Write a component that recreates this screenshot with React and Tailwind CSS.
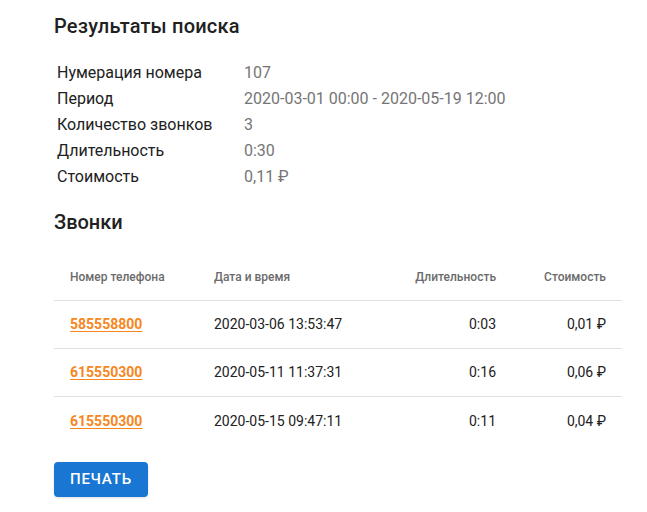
import React from 'react';

const summary = [
  { label: 'Нумерация номера', value: '107' },
  { label: 'Период', value: '2020-03-01 00:00 - 2020-05-19 12:00' },
  { label: 'Количество звонков', value: '3' },
  { label: 'Длительность', value: '0:30' },
  { label: 'Стоимость', value: '0,11 ₽' },
];

const calls = [
  { phone: '585558800', date: '2020-03-06 13:53:47', duration: '0:03', cost: '0,01 ₽' },
  { phone: '615550300', date: '2020-05-11 11:37:31', duration: '0:16', cost: '0,06 ₽' },
  { phone: '615550300', date: '2020-05-15 09:47:11', duration: '0:11', cost: '0,04 ₽' },
];

const App = () => {
  return (
    <div className="bg-white min-h-[512px] pl-[54px] pr-[25px] pt-[12px] text-[#212121]" style={{ fontFamily: 'Roboto, "Liberation Sans", sans-serif' }}>
      <h2 className="text-[20px] leading-[28px] font-medium tracking-[0.2px]">Результаты поиска</h2>

      {/* Сводка */}
      <div className="mt-[20px] pl-[3px]">
        {summary.map((row) => (
          <div key={row.label} className="flex h-[26px] items-center text-[16px]">
            <div className="w-[187px] text-[#212121]">{row.label}</div>
            <div className="text-[#757575]">{row.value}</div>
          </div>
        ))}
      </div>

      <h3 className="mt-[20px] text-[20px] leading-[24px] font-medium">Звонки</h3>

      {/* Таблица звонков */}
      <div className="mt-[19px] w-[568px]">
        <div className="grid grid-cols-[160px_180px_102px_126px] h-[48px] items-center border-b border-[#e0e0e0] text-[12px] font-medium text-[#6b6b6b] whitespace-nowrap">
          <div className="pl-[16px]">Номер телефона</div>
          <div>Дата и время</div>
          <div className="text-right">Длительность</div>
          <div className="text-right pr-[16px]">Стоимость</div>
        </div>
        {calls.map((c, i) => (
          <div
            key={i}
            className={`grid grid-cols-[160px_180px_102px_126px] h-[48px] items-center text-[14px] text-[#212121] whitespace-nowrap ${i < calls.length - 1 ? 'border-b border-[#e0e0e0]' : ''}`}
          >
            <div className="pl-[16px]">
              <a href="#" className="font-bold text-[#f7861c] underline underline-offset-2">{c.phone}</a>
            </div>
            <div>{c.date}</div>
            <div className="text-right">{c.duration}</div>
            <div className="text-right pr-[16px]">{c.cost}</div>
          </div>
        ))}
      </div>

      <button className="mt-[17px] h-[35px] px-[16px] rounded-[4px] bg-[#1976d2] text-white text-[15px] font-medium uppercase tracking-[0.75px] shadow-sm">
        Печать
      </button>
    </div>
  );
};

export default App;
